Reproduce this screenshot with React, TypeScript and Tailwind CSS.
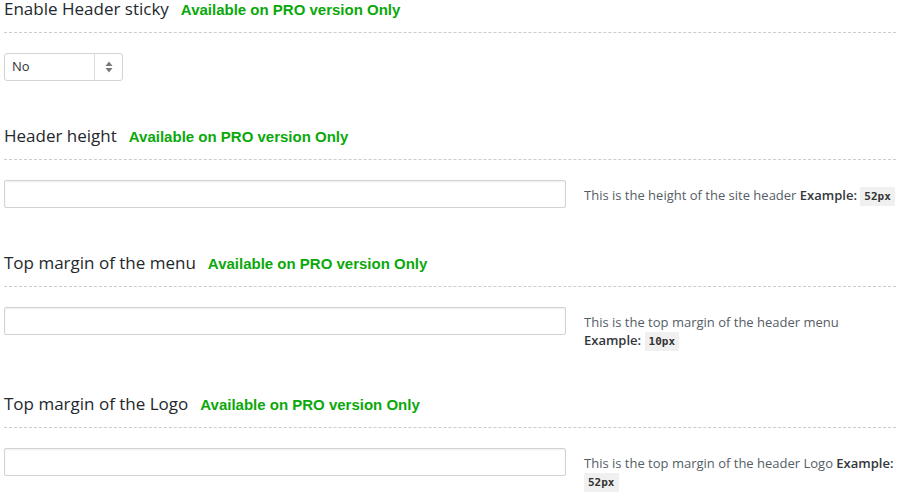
import React from 'react';

const sans = { fontFamily: '"Open Sans", sans-serif' };

const Pro: React.FC = () => (
    <span className="ml-3 text-[15px] leading-none font-bold text-[#0aa80a]" style={{ fontFamily: '"Liberation Sans", Arial, sans-serif' }}>
        Available on PRO version Only
    </span>
);

const Title: React.FC<{ text: string }> = ({ text }) => (
    <h3 className="border-b border-dashed border-[#cccccc] pb-[14px] text-[17px] leading-[18px] font-normal text-[#23282d]" style={sans}>
        {text}
        <Pro />
    </h3>
);

const Code: React.FC<{ children: React.ReactNode }> = ({ children }) => (
    <code className="rounded-[1px] bg-[#f0f0f0] px-[4px] py-[3px] text-[11px] leading-none font-bold text-[#333]" style={{ fontFamily: '"DejaVu Sans Mono", monospace' }}>
        {children}
    </code>
);

const Field: React.FC<{ title: string; desc: string; example: string }> = ({ title, desc, example }) => (
    <section className="mb-[46px]">
        <Title text={title} />
        <div className="mt-5 flex gap-[18px]">
            <input
                type="text"
                className="h-7 w-[562px] shrink-0 rounded-[2px] border border-[#d2d2d2] bg-white shadow-[inset_0_1px_2px_rgba(0,0,0,0.07)] outline-none"
            />
            <p className="pt-[6px] text-[13px] leading-[18px] text-[#555d66]" style={sans}>
                {desc} <b className="font-semibold text-[#32373c]">Example:</b> <Code>{example}</Code>
            </p>
        </div>
    </section>
);

const SortIcon: React.FC = () => (
    <svg width="8" height="12" viewBox="0 0 8 12" className="text-[#7a7a7a]">
        <path d="M4 0.5 L7.5 5 H0.5 Z" fill="currentColor" />
        <path d="M4 11.5 L7.5 7 H0.5 Z" fill="currentColor" />
    </svg>
);

const App: React.FC = () => {
    return (
        <div className="min-h-[501px] bg-white pl-[4px] pr-[7px]">
            <section className="mb-[46px]">
                <Title text="Enable Header sticky" />
                <div className="mt-5 flex h-7 w-[119px] items-stretch rounded-[3px] border border-[#d4d4d4] bg-white">
                    <span className="flex flex-1 items-center pl-[7px] text-[13px] text-[#333]" style={sans}>No</span>
                    <span className="flex w-[28px] items-center justify-center border-l border-[#dddddd]">
                        <SortIcon />
                    </span>
                </div>
            </section>

            <Field title="Header height" desc="This is the height of the site header" example="52px" />
            <Field title="Top margin of the menu" desc="This is the top margin of the header menu" example="10px" />
            <Field title="Top margin of the Logo" desc="This is the top margin of the header Logo" example="52px" />
        </div>
    );
};

export default App;
